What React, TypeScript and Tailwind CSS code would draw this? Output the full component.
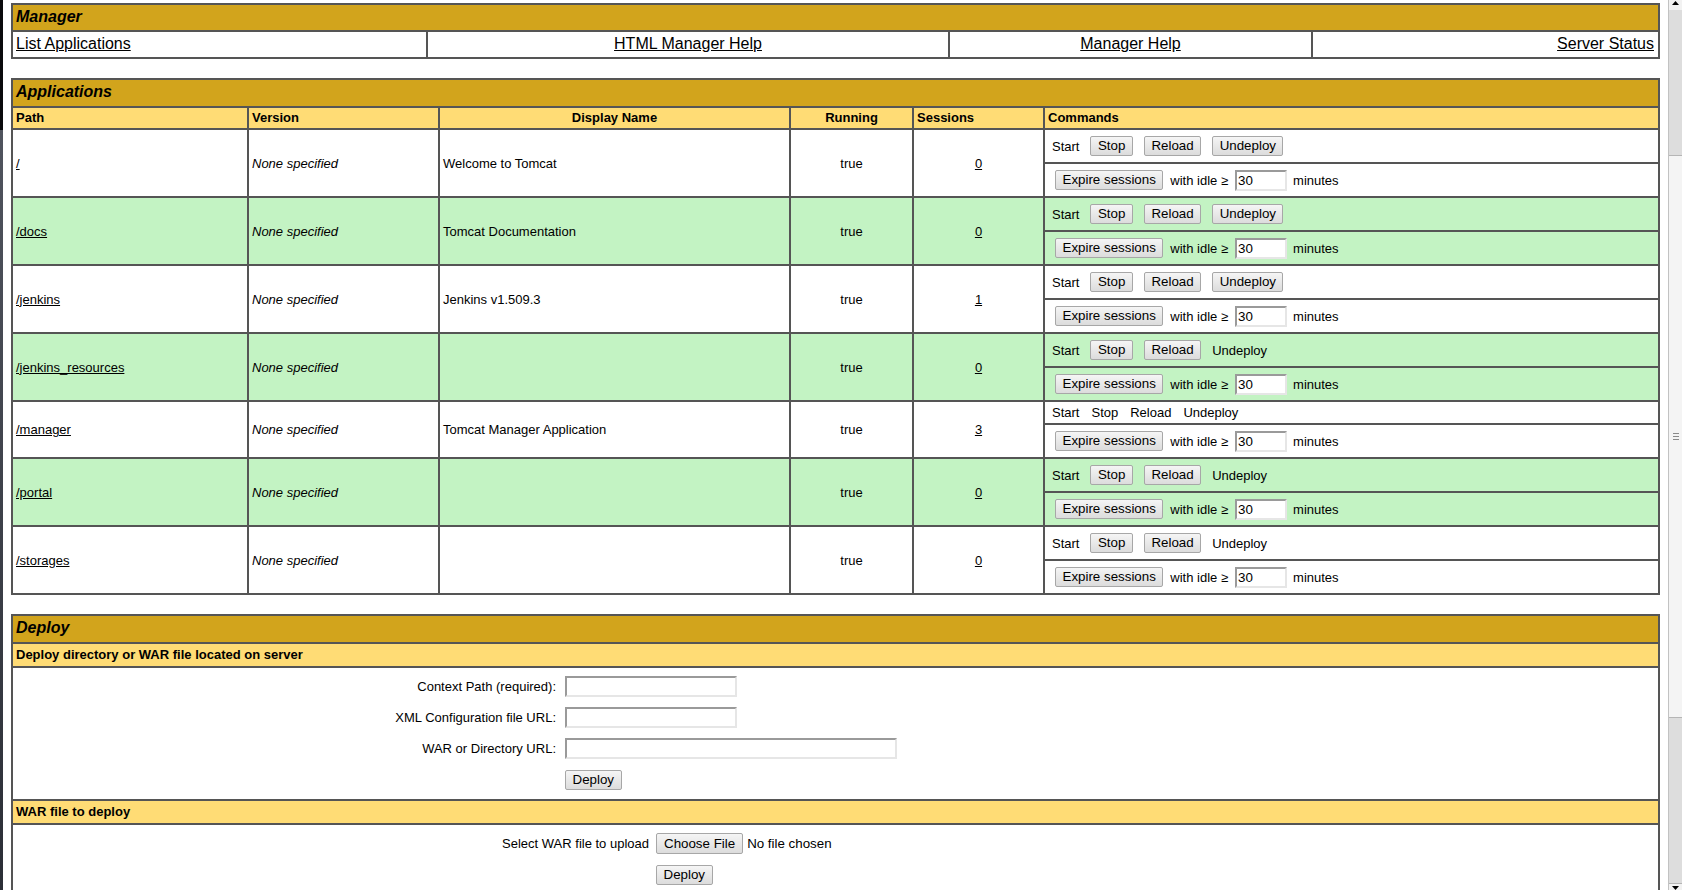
import React from 'react';

type Mode = 'full' | 'noUndeploy' | 'text';

const apps: { path: string; name: string; sessions: string; mode: Mode }[] = [
  { path: '/', name: 'Welcome to Tomcat', sessions: '0', mode: 'full' },
  { path: '/docs', name: 'Tomcat Documentation', sessions: '0', mode: 'full' },
  { path: '/jenkins', name: 'Jenkins v1.509.3', sessions: '1', mode: 'full' },
  { path: '/jenkins_resources', name: '', sessions: '0', mode: 'noUndeploy' },
  { path: '/manager', name: 'Tomcat Manager Application', sessions: '3', mode: 'text' },
  { path: '/portal', name: '', sessions: '0', mode: 'noUndeploy' },
  { path: '/storages', name: '', sessions: '0', mode: 'noUndeploy' },
];

const Btn: React.FC<{ children: React.ReactNode; tall?: boolean }> = ({ children, tall }) => (
  <button
    type="button"
    className={`${tall ? 'h-[21px] px-[7px]' : 'h-[20px] px-[6.5px]'} shrink-0 rounded-[2px] border border-[#a7a7a7] bg-[linear-gradient(#f5f5f5,#dcdcdc)] text-[13.333px] leading-[16px] text-black`}
  >
    {children}
  </button>
);

const Field: React.FC<{ width: string; value?: string }> = ({ width, value = '' }) => (
  <input
    readOnly
    value={value}
    className={`h-[21px] ${width} border-2 border-t-[#9a9a9a] border-l-[#9a9a9a] border-r-[#e6e6e6] border-b-[#e6e6e6] bg-white px-[1px] text-[13.333px] text-black outline-none`}
  />
);

const ManagerTable = () => (
  <div className="grid w-[1649px] grid-cols-[413px_520px_361px_345px] gap-[2px] border-2 border-[#555555] bg-[#555555] text-[16px] leading-[18px]">
    <div className="col-span-4 h-[25px] bg-[#D2A41C] px-[3px] pt-[3px] font-bold italic">Manager</div>
    <div className="h-[25px] bg-white px-[3px] pt-[3px]">
      <a className="underline">List Applications</a>
    </div>
    <div className="h-[25px] bg-white px-[3px] pt-[3px] text-center">
      <a className="underline">HTML Manager Help</a>
    </div>
    <div className="h-[25px] bg-white px-[3px] pt-[3px] text-center">
      <a className="underline">Manager Help</a>
    </div>
    <div className="h-[25px] bg-white px-[4px] pt-[3px] text-right">
      <a className="underline">Server Status</a>
    </div>
  </div>
);

const Commands: React.FC<{ mode: Mode; bg: string }> = ({ mode, bg }) => {
  if (mode === 'text') {
    return (
      <div className={`flex h-[21px] items-center gap-[12px] pl-[7px] ${bg}`}>
        <span>Start</span>
        <span>Stop</span>
        <span>Reload</span>
        <span>Undeploy</span>
      </div>
    );
  }
  return (
    <div className={`flex h-[32px] items-center gap-[11px] pl-[7px] ${bg}`}>
      <span>Start</span>
      <Btn>Stop</Btn>
      <Btn>Reload</Btn>
      {mode === 'full' ? <Btn>Undeploy</Btn> : <span>Undeploy</span>}
    </div>
  );
};

const AppsTable = () => (
  <div className="grid w-[1649px] grid-cols-[234px_189px_349px_121px_129px_613px] gap-[2px] border-2 border-[#555555] bg-[#555555] text-[13px] leading-[15px]">
    <div className="col-span-6 h-[26px] bg-[#D2A41C] px-[3px] pt-[3px] text-[16px] font-bold italic leading-[18px]">
      Applications
    </div>
    <div className="h-[20px] bg-[#FFDC75] px-[3px] pt-[2px] font-bold">Path</div>
    <div className="h-[20px] bg-[#FFDC75] px-[3px] pt-[2px] font-bold">Version</div>
    <div className="h-[20px] bg-[#FFDC75] px-[3px] pt-[2px] text-center font-bold">Display Name</div>
    <div className="h-[20px] bg-[#FFDC75] px-[3px] pt-[2px] text-center font-bold">Running</div>
    <div className="h-[20px] bg-[#FFDC75] px-[3px] pt-[2px] font-bold">Sessions</div>
    <div className="h-[20px] bg-[#FFDC75] px-[3px] pt-[2px] font-bold">Commands</div>

    {apps.map((a, i) => {
      const bg = i % 2 === 1 ? 'bg-[#C3F3C3]' : 'bg-white';
      return (
        <React.Fragment key={a.path}>
          <div className={`row-span-2 flex items-center px-[3px] ${bg}`}>
            <a className="underline">{a.path}</a>
          </div>
          <div className={`row-span-2 flex items-center px-[3px] italic ${bg}`}>None specified</div>
          <div className={`row-span-2 flex items-center px-[3px] ${bg}`}>{a.name}</div>
          <div className={`row-span-2 flex items-center justify-center ${bg}`}>true</div>
          <div className={`row-span-2 flex items-center justify-center ${bg}`}>
            <a className="underline">{a.sessions}</a>
          </div>
          <Commands mode={a.mode} bg={bg} />
          <div className={`flex h-[32px] items-center pl-[10px] ${bg}`}>
            <Btn>Expire sessions</Btn>
            <span className="ml-[7px]">with idle ≥</span>
            <span className="ml-[7px]">
              <Field width="w-[52px]" value="30" />
            </span>
            <span className="ml-[6px]">minutes</span>
          </div>
        </React.Fragment>
      );
    })}
  </div>
);

const DeploySection = () => (
  <div className="flex w-[1649px] shrink-0 flex-col gap-[2px] border-2 border-[#555555] bg-[#555555] text-[13px] leading-[15px]">
    <div className="h-[26px] bg-[#D2A41C] px-[3px] pt-[3px] text-[16px] font-bold italic leading-[18px]">Deploy</div>
    <div className="h-[22px] bg-[#FFDC75] px-[3px] pt-[3px] font-bold">
      Deploy directory or WAR file located on server
    </div>
    <div className="h-[131px] bg-white pt-[3px]">
      <div className="grid auto-rows-[31px] grid-cols-[543px_auto] items-center gap-x-[9px]">
        <div className="text-right">Context Path (required):</div>
        <div className="flex">
          <Field width="w-[172px]" />
        </div>
        <div className="text-right">XML Configuration file URL:</div>
        <div className="flex">
          <Field width="w-[172px]" />
        </div>
        <div className="text-right">WAR or Directory URL:</div>
        <div className="flex">
          <Field width="w-[332px]" />
        </div>
        <div />
        <div className="flex">
          <Btn>Deploy</Btn>
        </div>
      </div>
    </div>
    <div className="h-[22px] bg-[#FFDC75] px-[3px] pt-[3px] font-bold">WAR file to deploy</div>
    <div className="h-[100px] bg-white pt-[3px]">
      <div className="grid auto-rows-[31px] grid-cols-[636px_auto] items-center gap-x-[7px]">
        <div className="text-right">Select WAR file to upload</div>
        <div className="flex items-center gap-[4px] text-[13.333px]">
          <Btn tall>Choose File</Btn>
          <span>No file chosen</span>
        </div>
        <div />
        <div className="flex">
          <Btn>Deploy</Btn>
        </div>
      </div>
    </div>
  </div>
);

const Scrollbar = () => (
  <div className="flex w-[14px] shrink-0 flex-col border-l border-[#c2c2c2] bg-[#dddddd]">
    <div className="flex h-[10px] justify-center bg-[#f2f2f2] pt-[1px]">
      <svg width="7" height="4" viewBox="0 0 7 4">
        <polygon points="3.5,0 7,4 0,4" fill="#000" />
      </svg>
    </div>
    <div className="h-[145px]" />
    <div className="flex h-[563px] items-center justify-center border-y border-[#b5b5b5] bg-[#f4f4f4]">
      <div className="flex w-[6px] flex-col gap-[2px]">
        <div className="h-px bg-[#8a8a8a]" />
        <div className="h-px bg-[#8a8a8a]" />
        <div className="h-px bg-[#8a8a8a]" />
      </div>
    </div>
    <div className="flex-1" />
    <div className="flex h-[7px] justify-center border-t border-[#b5b5b5] bg-[#f2f2f2] pt-[2px]">
      <svg width="7" height="4" viewBox="0 0 7 4">
        <polygon points="0,0 7,0 3.5,4" fill="#000" />
      </svg>
    </div>
  </div>
);

export default function App() {
  return (
    <div className="flex h-[890px] w-[1682px] overflow-hidden bg-white font-['Liberation_Sans',Arial,sans-serif] text-black">
      <div className="flex w-[3px] shrink-0 flex-col">
        <div className="h-[130px] bg-[#0b0b0d]" />
        <div className="flex-1 bg-[linear-gradient(#50545e,#2b2e36)]" />
      </div>
      <main className="flex w-[1665px] shrink-0 flex-col gap-[19px] pl-[8px] pt-[3px]">
        <ManagerTable />
        <AppsTable />
        <DeploySection />
      </main>
      <Scrollbar />
    </div>
  );
}
